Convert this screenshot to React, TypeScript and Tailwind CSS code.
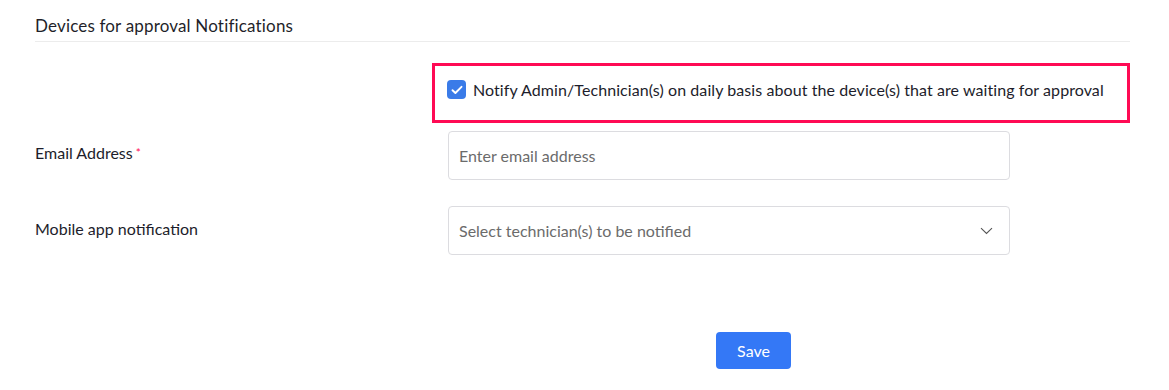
import { useState } from "react";

const font = { fontFamily: "Lato, 'Noto Sans', sans-serif" };

const App = () => {
  const [notify, setNotify] = useState(true);
  const [email, setEmail] = useState("");

  return (
    <div className="min-h-screen bg-white text-[#1d1d2b]" style={font}>
      <div className="pl-[35px] pr-[39px]">
        <div className="border-b border-[#ececec] pt-[14px] pb-[4px]">
          <h2 className="text-[17px] leading-[23px] tracking-[0.17px] text-[#1f1f2a]">Devices for approval Notifications</h2>
        </div>

        <div className="mt-[21px] ml-[397px] flex h-[60px] items-start border-[3px] border-[#ff0a54] pl-[12px] pt-[13px]">
          <label className="flex cursor-pointer items-center gap-[7px]">
            <button
              type="button"
              onClick={() => setNotify(!notify)}
              className={`flex h-[19px] w-[19px] items-center justify-center rounded-[4px] ${
                notify ? "bg-[#3a7be8]" : "border border-[#bbb] bg-white"
              }`}
            >
              {notify && (
                <svg width="12" height="10" viewBox="0 0 12 10" fill="none">
                  <path d="M1.5 5.2 4.4 8 10.5 1.8" stroke="white" strokeWidth="1.9" strokeLinecap="round" strokeLinejoin="round" />
                </svg>
              )}
            </button>
            <span className="text-[16px] leading-[21px] tracking-[0.08px]">
              Notify Admin/Technician(s) on daily basis about the device(s) that are waiting for approval
            </span>
          </label>
        </div>

        <div className="mt-[8px] flex items-center">
          <div className="w-[413px] text-[16px] leading-[21px] -mt-[6px]">
            Email Address<span className="ml-[3px] align-top text-[12px] text-[#ff0a54]">*</span>
          </div>
          <input
            value={email}
            onChange={(e) => setEmail(e.target.value)}
            placeholder="Enter email address"
            className="h-[49px] w-[562px] rounded-[4px] border border-[#dcdce0] px-[10px] text-[16px] text-[#333] placeholder:text-[#6b6b6b] focus:outline-none"
          />
        </div>

        <div className="mt-[26px] flex items-center">
          <div className="w-[413px] text-[16px] leading-[21px] -mt-[5px]">Mobile app notification</div>
          <div className="flex h-[49px] w-[562px] cursor-pointer items-center justify-between rounded-[4px] border border-[#dcdce0] pl-[10px] pr-[16px]">
            <span className="text-[16px] text-[#6b6b6b]">Select technician(s) to be notified</span>
            <svg width="13" height="8" viewBox="0 0 13 8" fill="none">
              <path d="M1 1.2 6.5 6.5 12 1.2" stroke="#555" strokeWidth="1.1" />
            </svg>
          </div>
        </div>

        <div className="mt-[77px] pl-[681px]">
          <button className="h-[37px] w-[75px] rounded-[4px] bg-[#3478f6] text-[16px] text-white hover:bg-[#2a68e0]">
            Save
          </button>
        </div>
      </div>
    </div>
  );
};

export default App;
